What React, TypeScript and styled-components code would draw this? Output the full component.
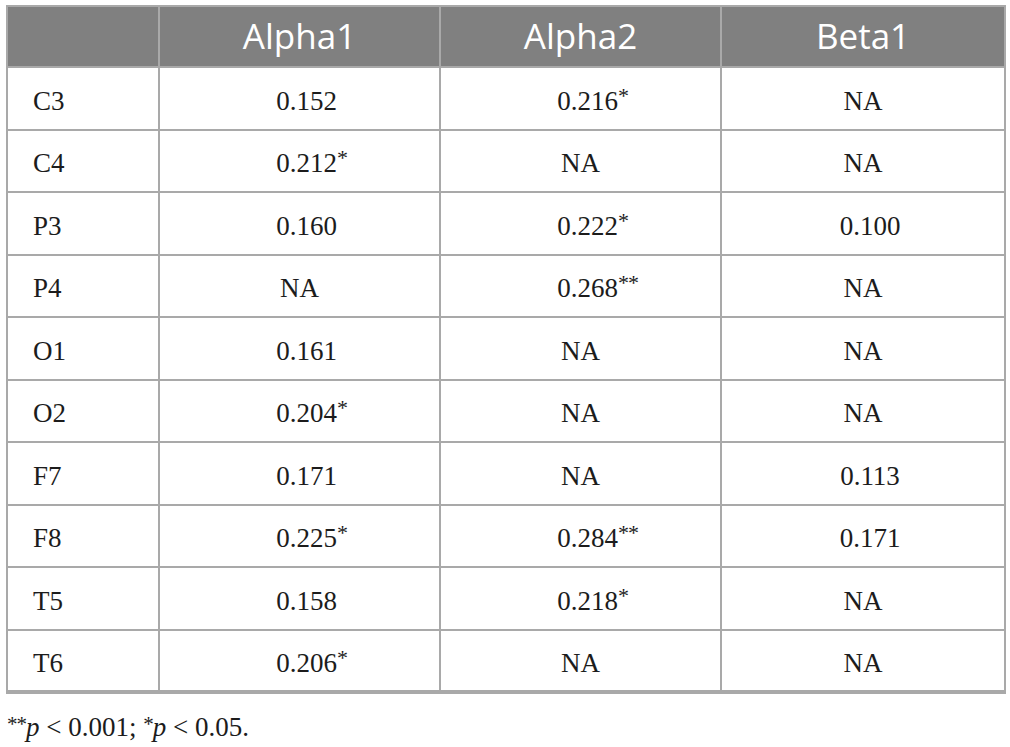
import React from "react";
import styled, { createGlobalStyle } from "styled-components";

const Global = createGlobalStyle`
  html, body { margin: 0; padding: 0; background: #ffffff; }
  body { font-family: "Liberation Serif", "Times New Roman", serif; color: #1c1c1c; }
`;

const Page = styled.div`
  padding: 5px 5px 0 6px;
  width: 1010px;
  box-sizing: border-box;
`;

const Table = styled.table`
  border-collapse: collapse;
  table-layout: fixed;
  width: 998px;
  border: 2px solid #a9a9a9;
  border-bottom: 4px solid #a9a9a9;
`;

const HeadCell = styled.th`
  background: #808080;
  color: #ffffff;
  font-family: "Open Sans", "Noto Sans", sans-serif;
  font-weight: 400;
  font-size: 35px;
  height: 61px;
  padding: 0 0 2px;
  text-align: center;
  border: 2px solid #a9a9a9;
  box-sizing: border-box;
`;

const Row = styled.tr`
  height: 62.5px;
`;

const LabelCell = styled.td`
  font-size: 27px;
  padding: 6px 0 0 25px;
  border: 2px solid #a9a9a9;
  text-align: left;
  vertical-align: middle;
`;

const ValueCell = styled.td`
  font-size: 27px;
  padding: 6px 0 0;
  border: 2px solid #a9a9a9;
  text-align: center;
  vertical-align: middle;
`;

const Num = styled.span<{ $num: boolean }>`
  position: relative;
  display: inline-block;
  padding-left: ${(p) => (p.$num ? "14px" : "0")};
`;

const Stars = styled.span`
  position: absolute;
  left: 100%;
  top: -3px;
  font-size: 22px;
  letter-spacing: -1px;
`;

const Note = styled.p`
  margin: 15px 0 0 1px;
  font-size: 27px;
  line-height: 30px;
`;

const Sup = styled.span`
  font-size: 21px;
  vertical-align: 5px;
  letter-spacing: -1px;
`;

const Ital = styled.i`
  font-style: italic;
`;

const rows: [string, string, string, string][] = [
  ["C3", "0.152", "0.216*", "NA"],
  ["C4", "0.212*", "NA", "NA"],
  ["P3", "0.160", "0.222*", "0.100"],
  ["P4", "NA", "0.268**", "NA"],
  ["O1", "0.161", "NA", "NA"],
  ["O2", "0.204*", "NA", "NA"],
  ["F7", "0.171", "NA", "0.113"],
  ["F8", "0.225*", "0.284**", "0.171"],
  ["T5", "0.158", "0.218*", "NA"],
  ["T6", "0.206*", "NA", "NA"],
];

function Value({ v }: { v: string }) {
  const m = v.match(/^([^*]+)(\**)$/);
  const base = m ? m[1] : v;
  const stars = m ? m[2] : "";
  const isNum = base !== "NA";
  return (
    <ValueCell>
      <Num $num={isNum}>
        {base}
        {stars && <Stars>{stars}</Stars>}
      </Num>
    </ValueCell>
  );
}

export default function App() {
  return (
    <Page>
      <Global />
      <Table>
        <colgroup>
          <col style={{ width: 152 }} />
          <col style={{ width: 281 }} />
          <col style={{ width: 281 }} />
          <col style={{ width: 284 }} />
        </colgroup>
        <thead>
          <tr>
            <HeadCell />
            <HeadCell>Alpha1</HeadCell>
            <HeadCell>Alpha2</HeadCell>
            <HeadCell>Beta1</HeadCell>
          </tr>
        </thead>
        <tbody>
          {rows.map((r) => (
            <Row key={r[0]}>
              <LabelCell>{r[0]}</LabelCell>
              <Value v={r[1]} />
              <Value v={r[2]} />
              <Value v={r[3]} />
            </Row>
          ))}
        </tbody>
      </Table>
      <Note>
        <Sup>**</Sup>
        <Ital>p</Ital> &lt; 0.001; <Sup>*</Sup>
        <Ital>p</Ital> &lt; 0.05.
      </Note>
    </Page>
  );
}
